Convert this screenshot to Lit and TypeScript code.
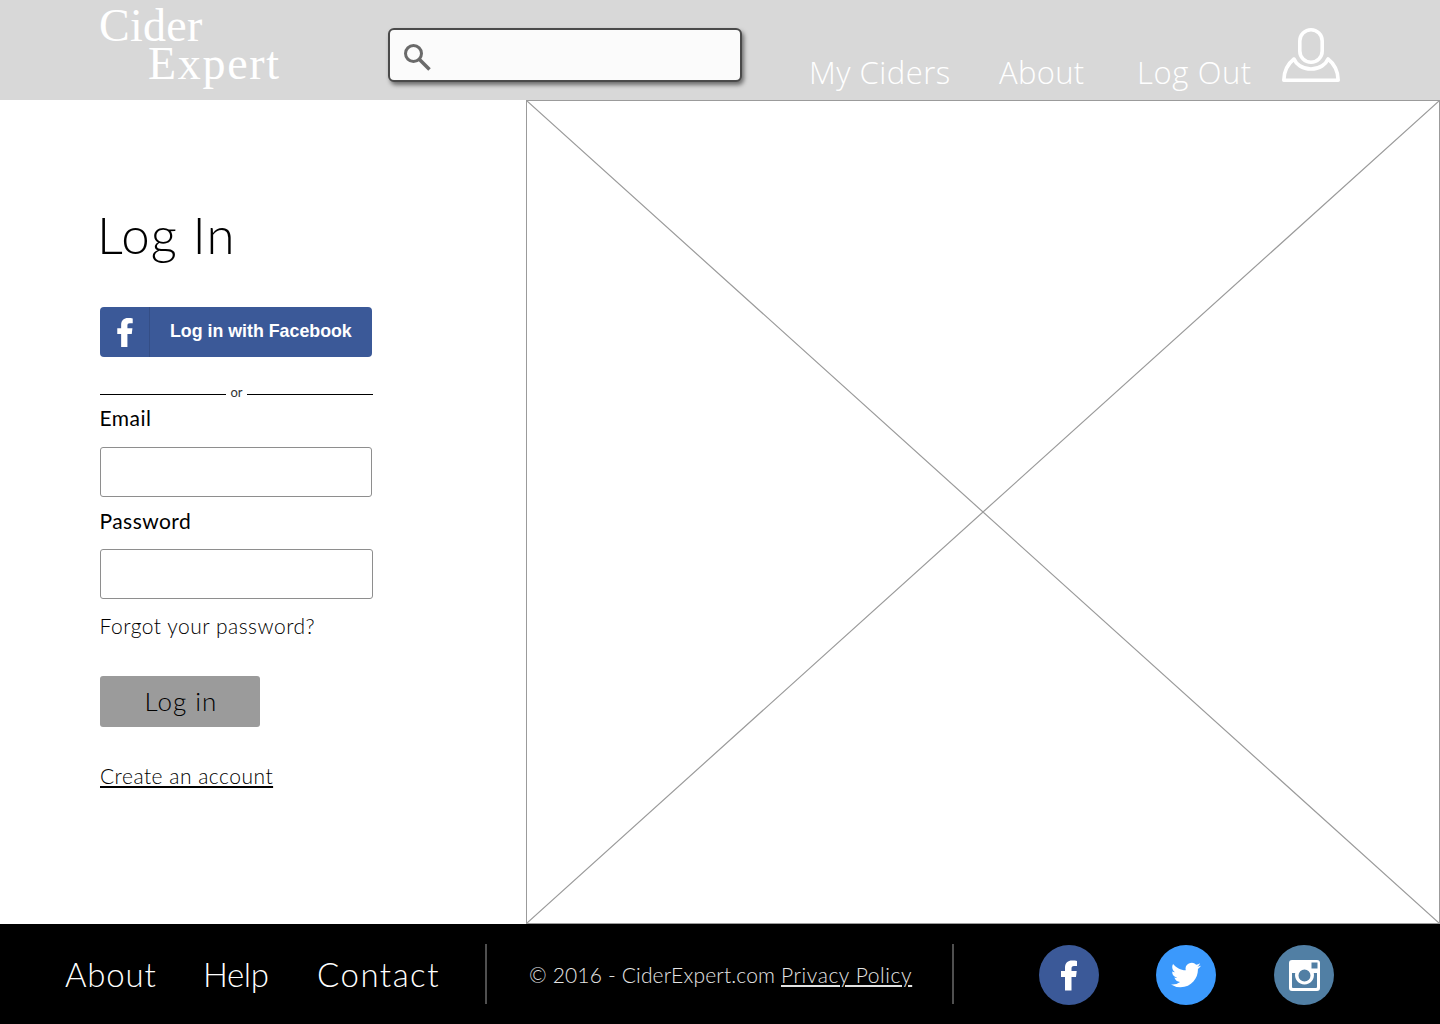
import { LitElement, html, css, svg } from "lit";
import { customElement } from "lit/decorators.js";

const fbF = () => html`<svg viewBox="0 0 16 30"><path fill="#fff" d="M4 30V16.500H0V10.500H4V7C4 2.400 7 0 11 0C13 0 15 0.200 16 0.400V5.400H13C11 5.400 10.500 6.200 10.500 8V10.500H15.700L15 16.500H10.500V30Z"/></svg>`;

@customElement("app-root")
export class AppRoot extends LitElement {
  static styles = css`
    :host { display: block; width: 1440px; height: 1024px; overflow: hidden; background: #fff; font-family: "Lato", "Noto Sans", sans-serif; color: #000; }
    * { box-sizing: border-box; }
    a { color: inherit; }

    header { height: 100px; background: #d8d8d8; display: flex; align-items: flex-start; padding-left: 100px; }
    .logo { width: 288px; font-family: "Liberation Serif", serif; font-size: 46px; line-height: 38px; color: #fff; padding-top: 7px; }
    .logo .c { letter-spacing: 0.3px; margin-left: -1px; }
    .logo .e { padding-left: 48px; letter-spacing: 1.700px; }
    .search { margin-top: 28px; width: 354px; height: 54px; background: #fbfbfb; border: 2px solid #4a4a4a; border-radius: 6px; box-shadow: 2px 3px 4px rgba(0,0,0,.5); display: flex; align-items: center; padding-left: 13px; }
    .search svg { width: 29px; height: 32px; }
    nav { display: flex; margin-left: 68px; padding-top: 52px; font-family: "Open Sans", sans-serif; font-weight: 300; font-size: 31px; letter-spacing: 0.3px; line-height: 40px; color: #fff; }
    nav span:nth-child(1) { width: 190px; margin-left: -1px; letter-spacing: 0.5px; }
    nav span:nth-child(2) { width: 138px; }
    nav span:nth-child(3) { width: 145px; letter-spacing: 0.6px; }
    .user { width: 58px; height: 54px; margin-top: 28px; }

    main { height: 824px; display: flex; }
    .left { width: 526px; padding: 105px 0 0 100px; }
    h1 { margin: 0 0 0 -3px; font-family: "Lato"; font-weight: 300; font-size: 51px; letter-spacing: 1px; line-height: 60px; height: 102px; }
    .fb { width: 272px; height: 50px; background: #3b5998; border-radius: 4px; display: flex; color: #fff; font-family: "Liberation Sans", sans-serif; font-weight: 700; font-size: 17.800px; align-items: center; }
    .fb .ic { width: 50px; height: 100%; border-right: 1px solid #344e86; display: flex; align-items: center; justify-content: center; }
    .fb svg { width: 16px; height: 29px; }
    .fb .t { padding-left: 20px; margin-top: -2px; }
    .or { width: 273px; height: 16px; margin-top: 28px; display: flex; align-items: center; gap: 5px; font-size: 13px; line-height: 16px; color: #333; }
    .or span { margin: -2px -1px 0 -1px; }
    .or i { flex: 1; height: 1px; background: #000; margin-top: 3px; }
    .label { font-size: 21px; line-height: 26px; letter-spacing: 0.45px; margin-left: -0.5px; }
    .l1 { margin-top: 4px; }
    .input { height: 50px; border: 1px solid #8e8e8e; border-radius: 3px; margin-top: 15px; background: #fff; }
    .i1 { width: 272px; margin-top: 16px; }
    .i2 { width: 273px; }
    .l2 { margin-top: 11px; }
    .forgot { margin-top: 14px; margin-left: -0.5px; font-size: 21px; letter-spacing: 0.5px; line-height: 26px; font-weight: 300; }
    .btn { width: 160px; height: 51px; margin-top: 37px; background: #9b9b9b; border-radius: 3px; font-size: 26px; letter-spacing: 1px; font-weight: 300; display: flex; align-items: center; justify-content: center; padding: 0 0 2px 2px; }
    .create { display: block; margin-top: 36px; font-size: 21px; letter-spacing: 0.5px; line-height: 26px; font-weight: 300; }

    .ph { flex: 1; border: 1px solid #9b9b9b; position: relative; }
    .ph svg { position: absolute; inset: 0; width: 100%; height: 100%; }

    footer { height: 100px; background: #000; display: flex; align-items: center; color: #fff; }
    .flinks { display: flex; padding-left: 65px; width: 485px; font-family: "Lato"; font-size: 33px; font-weight: 300; line-height: 40px; }
    .flinks span:nth-child(1) { width: 138px; letter-spacing: 0.8px; }
    .flinks span:nth-child(2) { width: 114px; letter-spacing: -0.4px; }
    .flinks span:nth-child(3) { letter-spacing: 1.500px; }
    .vr { width: 2px; height: 60px; background: #4f4f4f; }
    .copy { width: 465px; padding: 2px 0 0 42px; font-size: 21px; letter-spacing: 0.16px; font-weight: 300; color: #e4e4e4; line-height: 26px; }
    .copy a { letter-spacing: 0.58px; }
    .social { display: flex; padding: 2px 0 0 85px; gap: 57px; }
    .social div { width: 60px; height: 60px; border-radius: 50%; display: flex; align-items: center; justify-content: center; }
    .s1 { background: #3b5998; }
    .s2 { background: #3b99fc; }
    .social .s3 { background: #517fa4; margin-left: 1px; }
    .s1 svg { width: 16px; height: 33px; }
    .s2 svg { width: 30px; height: 30px; }
    .s3 svg { width: 31px; height: 31px; }
  `;

  render() {
    return html`
      <header>
        <div class="logo"><div class="c">Cider</div><div class="e">Expert</div></div>
        <div class="search">
          <svg viewBox="0 0 29 32" fill="none" stroke="#6a6a6a"><circle cx="10.500" cy="14.500" r="8" stroke-width="3"/><path d="M16.500 20.500L26.500 30.500" stroke-width="3.600"/></svg>
        </div>
        <nav><span>My Ciders</span><span>About</span><span>Log Out</span></nav>
        <svg class="user" viewBox="0 0 58 54" fill="none" stroke="#fff" stroke-width="3.600" stroke-linejoin="round">
          <rect x="17.800" y="1.800" width="22.400" height="32.500" rx="11.200"/>
          <path d="M12 31C5.500 36 2 43 1.800 52.200H56.200C56 43 52.500 36 46 31C44 36 38 41 29 41C20 41 14 36 12 31Z"/>
        </svg>
      </header>
      <main>
        <section class="left">
          <h1>Log In</h1>
          <div class="fb"><div class="ic">${fbF()}</div><div class="t">Log in with Facebook</div></div>
          <div class="or"><i></i><span>or</span><i></i></div>
          <div class="label l1">Email</div>
          <div class="input i1"></div>
          <div class="label l2">Password</div>
          <div class="input i2"></div>
          <div class="forgot">Forgot your password?</div>
          <div class="btn">Log in</div>
          <a class="create" href="#">Create an account</a>
        </section>
        <section class="ph">
          <svg viewBox="0 0 100 100" preserveAspectRatio="none">
            ${svg`<path d="M0 0L100 100M100 0L0 100" stroke="#9b9b9b" stroke-width="1.200" vector-effect="non-scaling-stroke" fill="none"/>`}
          </svg>
        </section>
      </main>
      <footer>
        <div class="flinks"><span>About</span><span>Help</span><span>Contact</span></div>
        <div class="vr"></div>
        <div class="copy">© 2016 - CiderExpert.com <a href="#">Privacy Policy</a></div>
        <div class="vr"></div>
        <div class="social">
          <div class="s1">${fbF()}</div>
          <div class="s2"><svg viewBox="0 0 24 24"><path fill="#fff" d="M23.950 4.570a10 10 0 0 1-2.820.770 4.960 4.960 0 0 0 2.160-2.720c-.950.550-2 .950-3.120 1.180a4.920 4.920 0 0 0-8.380 4.480C7.690 8.100 4.070 6.130 1.640 3.160a4.820 4.820 0 0 0-.670 2.480c0 1.710.870 3.210 2.190 4.100a4.900 4.900 0 0 1-2.230-.620v.060a4.920 4.920 0 0 0 3.950 4.830 5 5 0 0 1-2.210.080 4.940 4.940 0 0 0 4.600 3.420A9.870 9.870 0 0 1 0 19.540a13.940 13.940 0 0 0 7.550 2.210c9.050 0 14-7.500 14-13.980 0-.210 0-.420-.020-.630a9.940 9.940 0 0 0 2.460-2.550z"/></svg></div>
          <div class="s3"><svg viewBox="0 0 31 31"><path fill="#fff" fill-rule="evenodd" d="M3 0H28A3 3 0 0 1 31 3V28A3 3 0 0 1 28 31H3A3 3 0 0 1 0 28V3A3 3 0 0 1 3 0ZM22.500 2.500V8.500H28.500V2.500ZM3 13V27A1 1 0 0 0 4 28H27A1 1 0 0 0 28 27V13H24.800A9.500 9.500 0 1 1 6.200 13ZM15.500 9.500A6 6 0 1 0 15.500 21.500A6 6 0 1 0 15.500 9.500Z"/></svg></div>
        </div>
      </footer>
    `;
  }
}
